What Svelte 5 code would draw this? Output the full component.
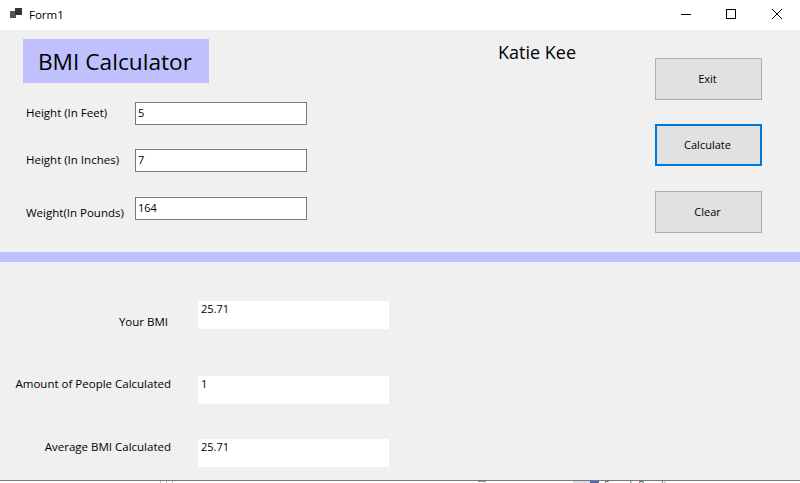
<script>
  const inputs = [
    { label: 'Height (In Feet)', value: '5' },
    { label: 'Height (In Inches)', value: '7' },
    { label: 'Weight(In Pounds)', value: '164' }
  ];
  const buttons = [
    { label: 'Exit', focused: false },
    { label: 'Calculate', focused: true },
    { label: 'Clear', focused: false }
  ];
  const results = [
    { label: 'Your BMI', value: '25.71', cls: 'bmi' },
    { label: 'Amount of People Calculated', value: '1', cls: 'amount' },
    { label: 'Average BMI Calculated', value: '25.71', cls: 'average' }
  ];
</script>

<div class="window">
  <header class="titlebar">
    <svg class="app-icon" width="12" height="10" viewBox="0 0 12 10">
      <rect x="0" y="3" width="6" height="7" fill="#555" />
      <rect x="5" y="0" width="7" height="7" fill="#333" />
    </svg>
    <span class="form-title">Form1</span>
    <div class="controls">
      <svg width="46" height="30" viewBox="0 0 46 30"><path d="M19 14.500h10" stroke="#000" fill="none" /></svg>
      <svg width="46" height="30" viewBox="0 0 46 30"><rect x="18.500" y="9.500" width="9" height="9" stroke="#000" fill="none" /></svg>
      <svg width="46" height="30" viewBox="0 0 46 30"><path d="M18 9l10 10M28 9l-10 10" stroke="#000" fill="none" /></svg>
    </div>
  </header>

  <section class="top">
    <div class="left">
      <h1 class="heading">BMI Calculator</h1>
      <div class="inputs">
        {#each inputs as row}
          <div class="input-row">
            <span class="input-label">{row.label}</span>
            <div class="textbox">{row.value}</div>
          </div>
        {/each}
      </div>
    </div>
    <div class="name">Katie Kee</div>
    <div class="buttons">
      {#each buttons as b}
        <button class:focused={b.focused}>{b.label}</button>
      {/each}
    </div>
  </section>

  <div class="band"></div>

  <section class="results">
    {#each results as r}
      <div class="result-row {r.cls}">
        <span class="result-label">{r.label}</span>
        <div class="result-box">{r.value}</div>
      </div>
    {/each}
  </section>

  <footer class="peek">
    <i class="tick t1"></i><i class="tick t2"></i><i class="tick t3"></i>
    <i class="tick t4"></i>
    <i class="swatch"></i><i class="swatch dark"></i>
    <span class="peek-text">Search Results</span>
  </footer>
</div>

<style>
  :global(body) {
    margin: 0;
    background: #fff;
  }

  .window {
    width: 800px;
    height: 483px;
    display: flex;
    flex-direction: column;
    overflow: hidden;
    background: #f0f0f0;
    color: #000;
    font-family: "Open Sans", "Noto Sans", sans-serif;
    font-size: 11.500px;
  }

  .titlebar {
    height: 30px;
    flex: none;
    display: flex;
    align-items: center;
    background: #fff;
    padding-left: 10px;
  }

  .app-icon {
    margin: 0 7px 4px 0;
  }

  .form-title {
    font-size: 11.500px;
    margin-bottom: 1px;
  }

  .controls {
    margin-left: auto;
    display: flex;
  }

  .controls svg {
    display: block;
  }

  .top {
    height: 222px;
    flex: none;
    display: flex;
  }

  .left {
    width: 475px;
    padding: 9px 0 0 23px;
    box-sizing: border-box;
  }

  .heading {
    width: 186px;
    height: 44px;
    margin: 0;
    padding-right: 2px;
    box-sizing: border-box;
    background: #c0c0ff;
    display: flex;
    align-items: center;
    justify-content: center;
    font-size: 22.700px;
    font-weight: 400;
  }

  .inputs {
    margin-top: 19px;
    display: flex;
    flex-direction: column;
    gap: 24px;
  }

  .input-row {
    display: flex;
    align-items: center;
    height: 23px;
    padding-left: 3px;
  }

  .input-row:last-child {
    margin-top: 1px;
  }

  .input-label {
    width: 109px;
    flex: none;
    margin-bottom: 2px;
  }

  .input-row:last-child .input-label {
    margin: 7px 0 0;
  }

  .textbox {
    width: 172px;
    height: 23px;
    box-sizing: border-box;
    border: 1px solid #7a7a7a;
    background: #fff;
    padding: 1px 2px;
    line-height: 17px;
    font-size: 11px;
  }

  .name {
    width: 180px;
    padding: 10px 0 0 23px;
    box-sizing: border-box;
    font-size: 18px;
  }

  .buttons {
    padding-top: 28px;
    display: flex;
    flex-direction: column;
    gap: 24px;
  }

  button {
    width: 107px;
    height: 42px;
    border: 1px solid #adadad;
    border-radius: 0;
    background: #e1e1e1;
    color: #000;
    font: inherit;
    font-size: 11px;
    padding: 0 2px 1px 0;
  }

  button:last-child {
    margin-top: 1px;
  }

  button.focused {
    border: 2px solid #0078d7;
  }

  .band {
    height: 10px;
    flex: none;
    background: #c0c0ff;
  }

  .results {
    flex: 1;
    padding-top: 39px;
  }

  .result-row {
    display: flex;
    align-items: flex-start;
  }

  .amount {
    margin-top: 46px;
  }

  .average {
    margin-top: 35px;
  }

  .result-label {
    width: 171px;
    text-align: right;
    flex: none;
    line-height: 16px;
  }

  .bmi .result-label {
    width: 168px;
    margin-top: 13px;
    margin-right: 3px;
  }

  .result-box {
    margin-left: 27px;
    width: 191px;
    height: 28px;
    box-sizing: border-box;
    background: #fff;
    padding: 0 3px;
    line-height: 16px;
    font-size: 11px;
  }

  .peek {
    height: 3px;
    box-sizing: border-box;
    flex: none;
    border-top: 1px solid #777;
    background: #fff;
    position: relative;
    overflow: hidden;
    font-size: 10px;
    line-height: 10px;
    color: #555;
  }

  .tick {
    position: absolute;
    top: 0;
    width: 1px;
    height: 3px;
    background: #bbb;
  }

  .t1 { left: 160px; }
  .t2 { left: 166px; }
  .t3 { left: 172px; }
  .t4 { left: 478px; width: 8px; height: 1px; background: #999; }

  .swatch {
    position: absolute;
    left: 573px;
    top: 0;
    width: 17px;
    height: 3px;
    background: #dcdce4;
  }

  .swatch.dark {
    left: 590px;
    width: 9px;
    background: #556a9c;
  }

  .peek-text {
    position: absolute;
    left: 604px;
    top: -1px;
  }
</style>
